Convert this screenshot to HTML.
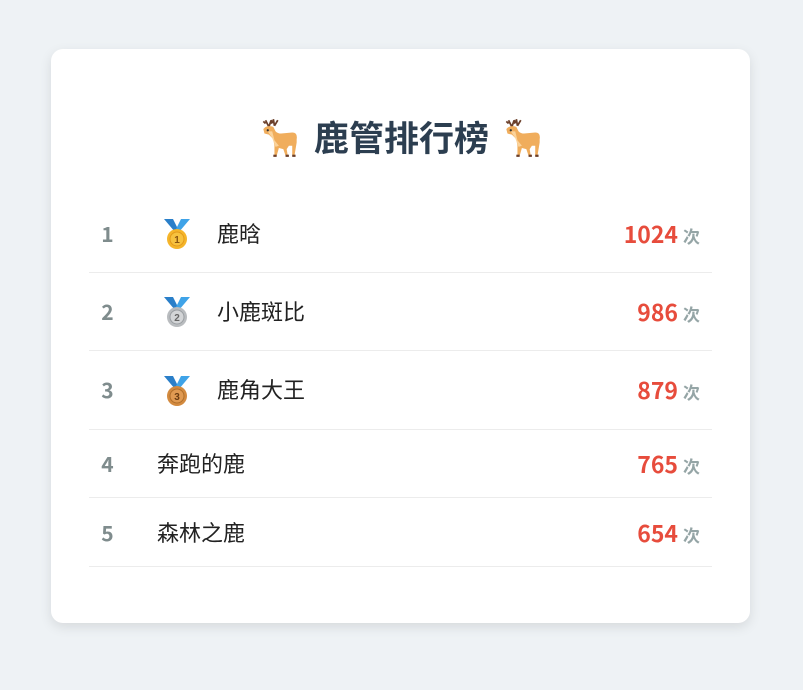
<!DOCTYPE html>
<html><head><meta charset="utf-8"><style>
body{margin:0;width:803px;height:690px;background:#eef2f5;font-family:"Liberation Sans","Noto Sans CJK SC",sans-serif;position:relative;overflow:hidden}
.card{position:absolute;left:51px;top:49px;width:699px;height:574px;background:#fff;border-radius:12px;box-shadow:0 4px 12px rgba(0,0,0,.1)}
h1{position:absolute;left:0;top:112px;width:803px;margin:0;text-align:center;font-size:35px;font-weight:bold;color:#2c3e50;line-height:50px;font-family:"Noto Sans CJK SC",sans-serif}
h1 svg{vertical-align:-7px;margin:0 14px}
.row{position:absolute;left:89px;width:623px;border-bottom:1px solid #ececec}
.rk{position:absolute;left:11px;width:15px;text-align:center;font-weight:bold;font-size:21px;color:#7f8c8d;font-family:"Noto Sans CJK SC",sans-serif}
.md{position:absolute;left:74px}
.nm{position:absolute;font-size:22px;color:#222;font-family:"Noto Sans CJK SC",sans-serif}
.sc{position:absolute;right:12px;font-family:"Noto Sans CJK SC",sans-serif;white-space:nowrap}
.sc b{color:#e74c3c;font-size:23px}
.sc span{color:#95a5a6;font-size:17px;font-weight:bold;margin-left:5px}
</style></head><body>
<div class="card"></div>
<svg width="0" height="0" style="position:absolute"><defs>
<g id="deer"><path d="M11 10 L8 4 M11 10 L13 4 M8 7 L6 5 M13 7 L15 5 M16 9 L15 3 M16 9 L19 4 M15 6 L13 4" stroke="#6b3f2a" stroke-width="1.6" fill="none"/>
<path d="M6 12 Q9 8 15 10 L17 14 Q19 16 22 16 L32 15 Q37 15 36 21 L36 24 L34 36 L32 36 L32 27 L29 27 L27 30 L28 36 L26 36 L24 30 L20 29 L18 36 L16 36 L16 27 L15 21 L11 17 L7 16 Z" fill="#f0ad5c"/>
<path d="M10 14 L14 14 L16 22 L20 27 L17 28 L14 20 Z" fill="#fbd39a"/>
<circle cx="10" cy="13" r="1" fill="#333"/><rect x="15" y="35" width="3" height="2" fill="#6b3f2a"/><rect x="26" y="35" width="3" height="2" fill="#6b3f2a"/><rect x="32" y="35" width="3" height="2" fill="#6b3f2a"/></g>
</defs></svg>
<h1><svg width="40" height="40" viewBox="4 2 34 36"><use href="#deer"/></svg>鹿管排行榜<svg width="40" height="40" viewBox="4 2 34 36"><use href="#deer"/></svg></h1>

<div class="row" style="top:195px;height:77px">
<div class="rk" style="top:24px">1</div>
<svg class="md" style="top:24px" width="28" height="31" viewBox="0 0 28 31"><path d="M1 0 L10 0 L15 10 L12 13 Z" fill="#2a7fc9"/><path d="M27 0 L18 0 L13 10 L16 13 Z" fill="#3fa3e8"/><circle cx="14" cy="20" r="10" fill="#f5b52a"/><circle cx="14" cy="20" r="7" fill="#f7c23f" stroke="#e39a1a"/><text x="14" y="24" font-size="10" text-anchor="middle" font-weight="bold" fill="#8a5510" font-family="Liberation Sans">1</text></svg>
<div class="nm" style="left:128px;top:22px">鹿晗</div>
<div class="sc" style="top:21px"><b>1024</b><span>次</span></div></div>

<div class="row" style="top:273px;height:77px">
<div class="rk" style="top:24px">2</div>
<svg class="md" style="top:24px" width="28" height="31" viewBox="0 0 28 31"><path d="M1 0 L10 0 L15 10 L12 13 Z" fill="#2a7fc9"/><path d="M27 0 L18 0 L13 10 L16 13 Z" fill="#3fa3e8"/><circle cx="14" cy="20" r="10" fill="#b9bcbf"/><circle cx="14" cy="20" r="7" fill="#d3d5d7" stroke="#9a9ea2"/><text x="14" y="24" font-size="10" text-anchor="middle" font-weight="bold" fill="#666" font-family="Liberation Sans">2</text></svg>
<div class="nm" style="left:128px;top:22px">小鹿斑比</div>
<div class="sc" style="top:21px"><b>986</b><span>次</span></div></div>

<div class="row" style="top:351px;height:78px">
<div class="rk" style="top:24px">3</div>
<svg class="md" style="top:25px" width="28" height="31" viewBox="0 0 28 31"><path d="M1 0 L10 0 L15 10 L12 13 Z" fill="#2a7fc9"/><path d="M27 0 L18 0 L13 10 L16 13 Z" fill="#3fa3e8"/><circle cx="14" cy="20" r="10" fill="#d38a3f"/><circle cx="14" cy="20" r="7" fill="#e09a52" stroke="#b06e2a"/><text x="14" y="24" font-size="10" text-anchor="middle" font-weight="bold" fill="#6b3c12" font-family="Liberation Sans">3</text></svg>
<div class="nm" style="left:128px;top:22px">鹿角大王</div>
<div class="sc" style="top:21px"><b>879</b><span>次</span></div></div>

<div class="row" style="top:430px;height:67px">
<div class="rk" style="top:19px">4</div>
<div class="nm" style="left:68px;top:17px">奔跑的鹿</div>
<div class="sc" style="top:16px"><b>765</b><span>次</span></div></div>

<div class="row" style="top:498px;height:68px">
<div class="rk" style="top:20px">5</div>
<div class="nm" style="left:68px;top:18px">森林之鹿</div>
<div class="sc" style="top:17px"><b>654</b><span>次</span></div></div>
</body></html>
